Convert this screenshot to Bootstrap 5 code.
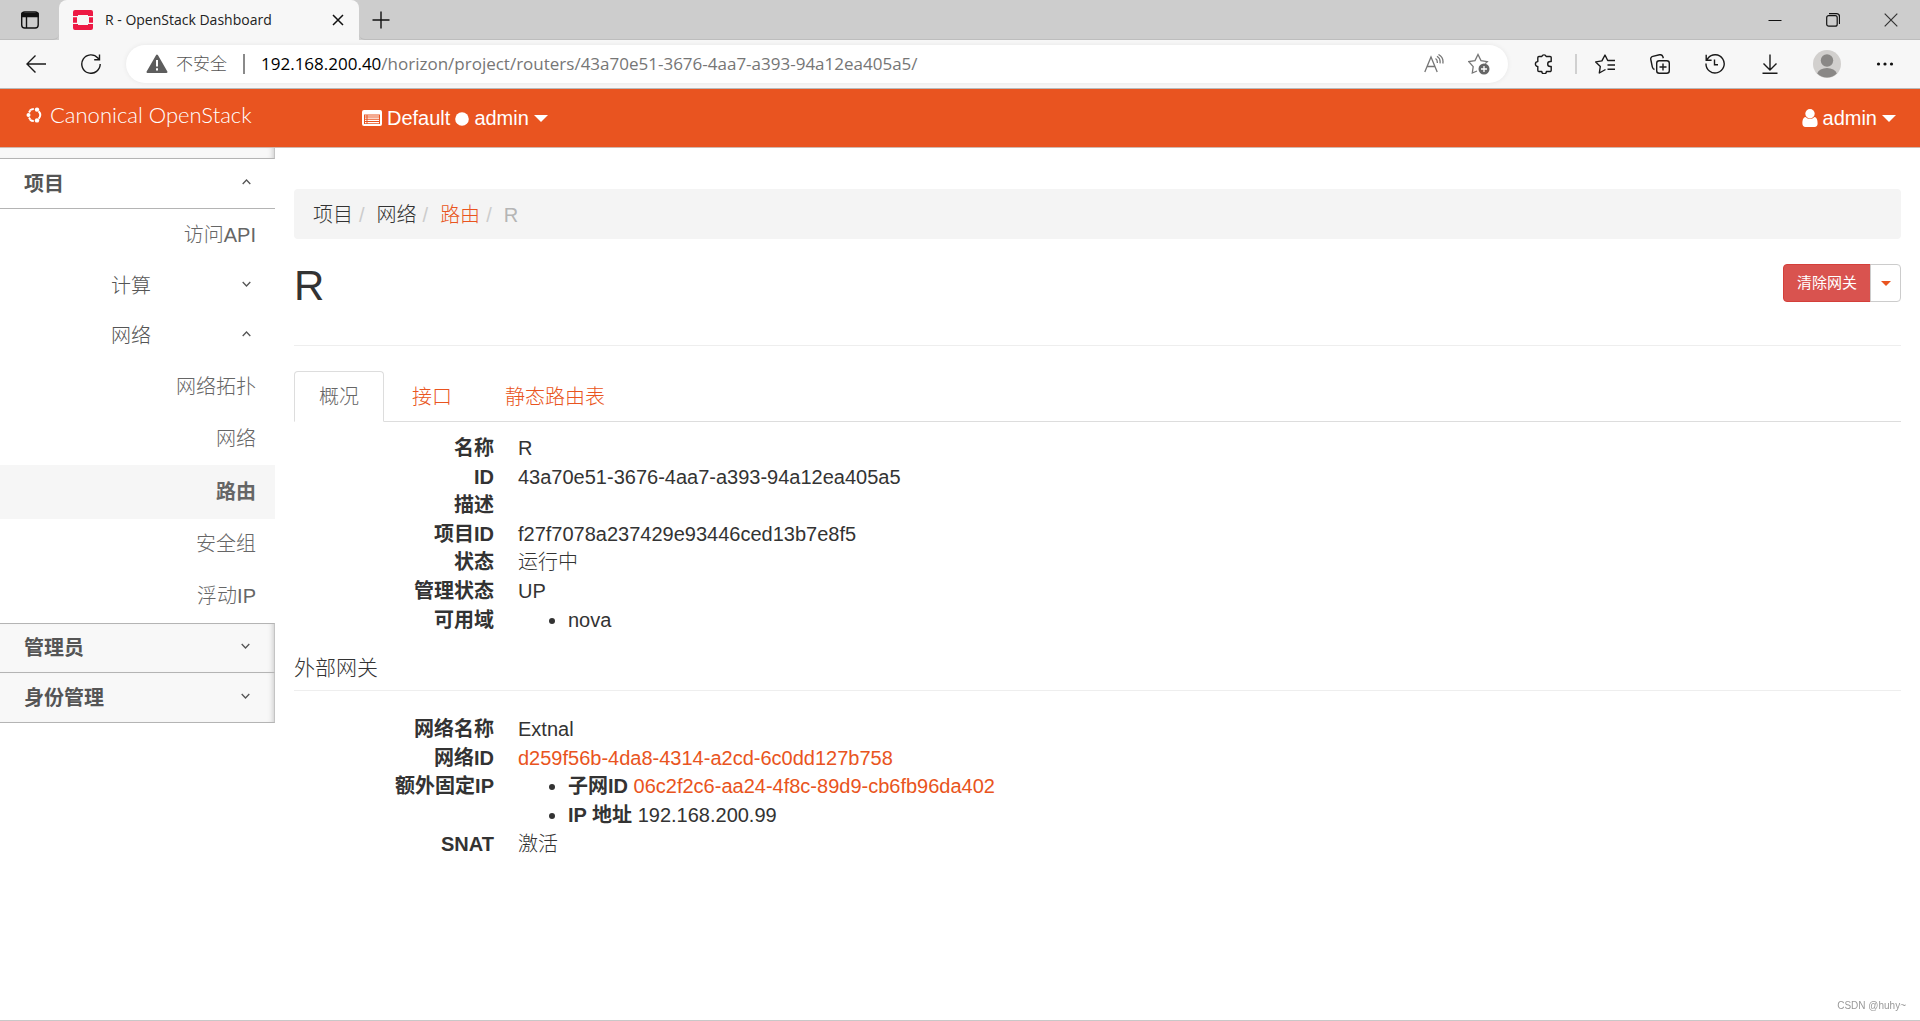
<!DOCTYPE html>
<html lang="zh-CN">
<head>
<meta charset="utf-8">
<meta name="viewport" content="width=device-width, initial-scale=1">
<title>R - OpenStack Dashboard</title>
<link href="https://cdn.jsdelivr.net/npm/bootstrap@5.3.0/dist/css/bootstrap.min.css" rel="stylesheet">
<style>
  :root { --brand: #e95420; --rule: #b4b4b4; }
  body {
    font-family: "Liberation Sans", Arial, "Noto Sans CJK SC", sans-serif;
    font-size: 20px; font-weight: 300; line-height: 1.43; color: #333; background: #fff;
    min-height: 100vh; border-bottom: 1px solid #c8c8c8;
  }
  a { color: var(--brand); text-decoration: none; }
  a:hover { color: #ae3910; }
  svg { display: block; flex: none; }
  strong { font-weight: 700; }
  .icon-btn { border: 0; background: none; padding: 0; display: flex; align-items: center; justify-content: center; color: #1a1a1a; }

  /* browser chrome */
  .chrome { font-family: "Open Sans", "Noto Sans CJK SC", sans-serif; font-weight: 400; }
  .tab-strip { height: 40px; background: #cdcdcd; }
  .tab-strip .side { height: 40px; border-bottom: 1px solid #bdbdbd; }
  .tab-strip .side-start { width: 59px; border-bottom-right-radius: 6px; }
  .tab-strip .side-end { border-bottom-left-radius: 6px; }
  .browser-tab { width: 300px; height: 40px; background: #f7f7f7; border-radius: 8px 8px 0 0; padding: 0 14px; font-size: 14px; color: #222; }
  .new-tab { width: 43px; }
  .window-btn { width: 58px; }
  .toolbar { height: 49px; background: #f7f7f7; border-bottom: 1px solid #b9b9b9; padding-right: 8px; }
  .nav-btn { width: 55px; height: 40px; }
  .address { height: 38px; border-radius: 19px; background: #fff; box-shadow: 0 0 5px rgba(0,0,0,.07); padding: 0 18px 0 20px; font-size: 17px; line-height: 24px; color: #767676; }
  .address .unsafe { font-weight: 300; color: #555; }
  .v-rule { width: 2px; height: 20px; background: #8a8a8a; }
  .v-rule-light { background: #d0d0d0; }
  .url { outline: 0; white-space: nowrap; }
  .url b { font-weight: 400; color: #000; }
  .tool-btn { width: 55px; height: 40px; }
  .profile-btn { width: 60px; }

  /* dashboard header */
  .topbar { height: 59px; background: var(--brand); border-bottom: 1px solid #cfb9b0; padding: 0 24px 0 26px; }
  .topbar a { color: #fff; }
  .brand-link { width: 336px; font-family: Lato, sans-serif; font-weight: 300; font-size: 22px; line-height: 28px; padding-bottom: 6px; }
  .menu-link { display: flex; align-items: center; gap: 5px; }
  .caret-down { border: 7px solid transparent; border-top-color: currentColor; border-bottom: 0; }

  /* sidebar */
  .sidebar { width: 275px; flex: none; }
  .panel-btn { display: flex; align-items: center; justify-content: space-between; width: 100%; border: 0; border-bottom: 1px solid var(--rule); background: #fff; padding: 0 24px; height: 50px; font-weight: 700; color: #555; line-height: 28px; }
  .shade { background: #f8f8f8; box-shadow: inset -5px 0 6px -5px #bbb; border-right: 1px solid #c4c4c4; }
  .panel-cap { height: 11px; border-bottom: 1px solid var(--rule); }
  .panel-last { border-top: 1px solid var(--rule); }
  .group-btn { display: flex; align-items: center; justify-content: space-between; width: 100%; height: 50px; border: 0; background: #fff; padding: 0 24px 0 111px; font-weight: 300; color: #555; }
  .side-link { display: block; text-align: right; padding: 12px 19px; line-height: 28px; color: #666; }
  .side-link.current { background: #f6f6f6; font-weight: 700; padding: 13px 19px; }
  .side-link.current ~ .side-link { padding: 11px 19px 13px; }

  /* content */
  .content { padding: 41px 19px 0; min-width: 0; }
  .crumbs { background: #f4f4f4; border-radius: 4px; padding: 12px 19px 10px; line-height: 28px; margin-bottom: 25px; --bs-breadcrumb-divider-color: #ccc; --bs-breadcrumb-item-padding-x: 6px; --bs-breadcrumb-item-active-color: #b5b5b5; }
  .crumbs .breadcrumb-item::before { padding-right: 12px; }
  .page-head { border-bottom: 1px solid #eee; padding-bottom: 37px; margin-bottom: 25px; }
  .page-title { font-size: 42px; font-weight: 400; line-height: 44px; margin: 0; }
  .act { font-size: 15px; font-weight: 400; line-height: 22px; padding: 7px 13px; border-radius: 4px; height: 38px; }
  .act-danger { color: #fff; background: #d9534f; border-color: #d43f3a; }
  .act-more { color: var(--brand); background: #fff; border-color: #ccc; width: 31px; padding: 0 8px; }
  .act-more .caret-down { border-width: 5px 5px 0; }
  .tabs { --bs-nav-tabs-border-color: #ddd; --bs-nav-tabs-border-radius: 4px; gap: 3px; }
  .tabs .nav-link { padding: 11px 24px 9px; line-height: 29px; color: var(--brand); }
  .tabs .nav-link.active { color: #666; border-color: #ddd #ddd #fff; }
  .props { display: grid; grid-template-columns: 200px 1fr; column-gap: 24px; margin: 0; }
  .props dt { text-align: right; font-weight: 700; }
  .props dd { margin: 0; font-weight: 300; }
  .props ul { margin: 0; padding-left: 50px; }
  .section-title { font-size: 21px; font-weight: 300; line-height: 28px; margin: 20px 0 24px; padding-bottom: 8px; border-bottom: 1px solid #eee; }
  .watermark { position: fixed; right: 14px; bottom: 7px; font-size: 10px; line-height: 16px; color: #999; }
</style>
</head>
<body>
<div class="chrome">
  <div class="tab-strip d-flex">
    <div class="side side-start d-flex justify-content-center align-items-center">
      <button class="icon-btn ps-0" aria-label="标签页操作"><svg width="20" height="20" viewBox="0 0 20 20" fill="none" stroke="#111" stroke-width="1.4"><rect x="1.700" y="2" width="16.500" height="16" rx="3"/><path d="M2 3.500h16v3H2z" fill="#111"/><path d="M6.500 7v11"/></svg></button>
    </div>
    <div class="browser-tab d-flex align-items-center">
      <svg width="20" height="20" viewBox="0 0 20 20" fill="#ed1944"><path d="M2 0h16a2 2 0 0 1 2 2v4h-5V5H5v1H0V2a2 2 0 0 1 2-2zM0 7.200h4v5.600H0zM16 7.200h4v5.600h-4zM0 14h5v1h10v-1h5v4a2 2 0 0 1-2 2H2a2 2 0 0 1-2-2z"/></svg>
      <span class="ms-2 ps-1 flex-grow-1">R - OpenStack Dashboard</span>
      <button class="icon-btn" aria-label="关闭标签页"><svg width="14" height="14" viewBox="0 0 14 14" stroke="#111" stroke-width="1.500"><path d="M2 2l10 10M12 2L2 12"/></svg></button>
    </div>
    <div class="side side-end d-flex flex-grow-1">
      <button class="icon-btn new-tab" aria-label="新建标签页"><svg width="18" height="18" viewBox="0 0 18 18" stroke="#111" stroke-width="1.400"><path d="M9 .5v17M.5 9h17"/></svg></button>
      <span class="flex-grow-1"></span>
      <button class="icon-btn window-btn" aria-label="最小化"><svg width="14" height="14" viewBox="0 0 14 14" stroke="#111"><path d="M.5 7.500h13"/></svg></button>
      <button class="icon-btn window-btn" aria-label="还原"><svg width="14" height="14" viewBox="0 0 14 14" fill="none" stroke="#111" stroke-width="1.200"><rect x=".7" y="2.700" width="10.500" height="10.500" rx="2"/><path d="M3 .700h7.500a3 3 0 0 1 3 3V11"/></svg></button>
      <button class="icon-btn window-btn" aria-label="关闭"><svg width="14" height="14" viewBox="0 0 14 14" stroke="#333" stroke-width="1.200"><path d="M.7.7l12.600 12.600M13.300.7L.7 13.300"/></svg></button>
    </div>
  </div>
  <div class="toolbar d-flex align-items-center">
    <div class="d-flex ps-2">
      <button class="icon-btn nav-btn" aria-label="返回"><svg width="20" height="18" viewBox="0 0 20 18" fill="none" stroke="currentColor" stroke-width="1.400"><path d="M20 9H1M9.500.5L1 9l8.500 8.500"/></svg></button>
      <button class="icon-btn nav-btn" aria-label="刷新"><svg width="20" height="20" viewBox="0 0 20 20" fill="none" stroke="currentColor" stroke-width="1.400"><path d="M19.200 10a9.200 9.200 0 1 1-2.300-6L18 5.500M18.500.5v5.300h-5.300"/></svg></button>
    </div>
    <div class="address d-flex align-items-center flex-grow-1 ms-2">
      <svg width="22" height="20" viewBox="0 0 22 20"><path d="M11 1.500L20.500 18H1.500z" fill="#5d5d5d" stroke="#5d5d5d" stroke-width="2" stroke-linejoin="round"/><path d="M11 6v6.500M11 14.300v2.200" stroke="#fff" stroke-width="2"/></svg>
      <span class="unsafe ms-2">不安全</span>
      <span class="v-rule mx-3"></span>
      <div class="url flex-grow-1" role="textbox" aria-label="地址栏" contenteditable="true" spellcheck="false"><b>192.168.200.40</b>/horizon/project/routers/43a70e51-3676-4aa7-a393-94a12ea405a5/</div>
      <button class="icon-btn" aria-label="大声朗读"><svg width="20" height="20" viewBox="0 0 20 20" fill="none" stroke="#767676" stroke-width="1.300"><path d="M.8 18L7 3l6.200 15M3 12.500h8M11.500 4.500c1.500 1 2 2.500 1.800 4.500M13 2.300c2.500 1.500 3.500 4 3 7M14.500.5c3.500 2 5 5.500 4.300 9"/></svg></button>
      <button class="icon-btn ms-4" aria-label="添加到收藏夹"><svg width="22" height="22" viewBox="0 0 22 22" fill="none" stroke="#767676" stroke-width="1.300"><path d="M9 18l-4.700 2 .9-6.300L.8 8.600l6.200-1L10 1.500l3 6.100 6.300 1-2 2"/><circle cx="16" cy="16" r="5.500" fill="#666" stroke="none"/><path d="M16 13v6M13 16h6" stroke="#fff"/></svg></button>
    </div>
    <button class="icon-btn tool-btn ms-2" aria-label="扩展"><svg width="20" height="20" viewBox="0 0 20 20" fill="none" stroke="currentColor" stroke-width="1.400" stroke-linejoin="round"><path d="M5 2.500h2.800a2.300 2.300 0 0 1 4.400 0H16a1.200 1.200 0 0 1 1.200 1.200V7.500h-1a2.500 2.500 0 0 0 0 5h1v3.800A1.200 1.200 0 0 1 16 17.500h-3.600a2.300 2.300 0 0 1-4.600 0H5a1.200 1.200 0 0 1-1.200-1.200v-3.900a2.400 2.400 0 0 1 0-4.800V3.700A1.200 1.200 0 0 1 5 2.500z"/></svg></button>
    <span class="v-rule v-rule-light ms-1"></span>
    <button class="icon-btn tool-btn" aria-label="收藏夹"><svg width="20" height="20" viewBox="0 0 20 20" fill="none" stroke="currentColor" stroke-width="1.400" stroke-linejoin="round"><path d="M10.500 15.500L4.300 19l1-6.500L.7 7.900l6.200-1L10 1l2.700 5.500H20M12.500 11H20M12.500 15.300H20"/></svg></button>
    <button class="icon-btn tool-btn" aria-label="集锦"><svg width="20" height="20" viewBox="0 0 20 20" fill="none" stroke="currentColor" stroke-width="1.400"><rect x="6.700" y="6.700" width="12.600" height="12.600" rx="2.500"/><path d="M13 9.500v7M9.500 13h7M4.500 15.500C3 15 2.600 14 2.300 12.800L.8 5.500C.4 4 1.300 2.800 2.800 2.400L9.500.8c1.800-.4 3 .5 3.400 2l.4 1.500"/></svg></button>
    <button class="icon-btn tool-btn" aria-label="历史记录"><svg width="20" height="20" viewBox="0 0 20 20" fill="none" stroke="currentColor" stroke-width="1.400"><path d="M1 9.500a9.100 9.100 0 1 0 2-5.300L1.500 6M1.200.8v5.400h5.400M9.500 5.500v5.300H13"/></svg></button>
    <button class="icon-btn tool-btn" aria-label="下载"><svg width="16" height="20" viewBox="0 0 16 20" fill="none" stroke="currentColor" stroke-width="1.400"><path d="M8 .5v15M1.500 9.500L8 16l6.500-6.500M.5 19.300h15"/></svg></button>
    <button class="icon-btn tool-btn profile-btn" aria-label="个人资料"><svg width="28" height="28" viewBox="0 0 28 28"><circle cx="14" cy="14" r="14" fill="#d2d0ce"/><circle cx="14" cy="10.500" r="6.200" fill="#8a8886"/><path d="M4.200 23.500a10 7 0 0 1 19.600 0A14 14 0 0 1 4.200 23.500z" fill="#8a8886"/></svg></button>
    <button class="icon-btn tool-btn" aria-label="设置及其他"><svg width="18" height="4" viewBox="0 0 18 4" fill="#111"><circle cx="2.500" cy="2" r="1.600"/><circle cx="9" cy="2" r="1.600"/><circle cx="15.500" cy="2" r="1.600"/></svg></button>
  </div>
</div>

<nav class="topbar d-flex align-items-center">
  <a href="#" class="brand-link d-flex align-items-center gap-2">
    <svg width="16" height="16" viewBox="0 0 16 16" fill="none" stroke="#fff" stroke-width="2"><path d="M4 3.300A6 6 0 0 1 7.800 2M12.600 4.200A6 6 0 0 1 14.300 8a6 6 0 0 1-1.700 3.800M7.800 14A6 6 0 0 1 4 12.700"/><path d="M3 5.500l1.200-2M3 10.500l1.200 2"/><circle cx="2.500" cy="8" r="2" fill="#fff" stroke="none"/><circle cx="11" cy="2.600" r="2.200" fill="#fff" stroke="none"/><circle cx="11" cy="13.400" r="2.200" fill="#fff" stroke="none"/></svg>
    <span>Canonical OpenStack</span>
  </a>
  <a href="#" class="menu-link">
    <svg width="20" height="16" viewBox="0 0 20 16"><rect width="20" height="16" rx="2" fill="#fff"/><path d="M2 4.500h16v9.500H2z" fill="#e95420"/><path d="M3 6h1.500M5.500 6H17M3 8.200h1.500M5.500 8.200H17M3 10.400h1.500M5.500 10.400H17M3 12.600h1.500M5.500 12.600H17" stroke="#fff" stroke-width="1.200"/></svg>
    <span>Default</span>
    <svg width="14" height="16" viewBox="0 0 14 16"><circle cx="7" cy="9" r="6.800" fill="#fff"/></svg>
    <span>admin</span>
    <span class="caret-down"></span>
  </a>
  <a href="#" class="menu-link ms-auto">
    <svg width="16" height="18" viewBox="0 0 16 18" fill="#fff"><circle cx="8" cy="4.700" r="4.700"/><path d="M3.500 8C1 8.500.4 11.500.4 14.500.4 16.500 1.500 18 3.500 18h9c2 0 3.100-1.500 3.100-3.500 0-3-.6-6-3.100-6.500a6 6 0 0 1-9 0z"/></svg>
    <span>admin</span>
    <span class="caret-down"></span>
  </a>
</nav>

<div class="d-flex">
  <aside class="sidebar">
    <div class="panel-cap shade"></div>
    <button class="panel-btn" aria-expanded="true">项目<svg width="9" height="12" viewBox="0 0 9 12" fill="none" stroke="#555" stroke-width="1.300"><path d="M.7 6L4.500 2l3.800 4"/></svg></button>
    <a href="#" class="side-link">访问API</a>
    <button class="group-btn" aria-expanded="false">计算<svg width="9" height="12" viewBox="0 0 9 12" fill="none" stroke="#555" stroke-width="1.300"><path d="M.7 2l3.800 4 3.800-4"/></svg></button>
    <button class="group-btn" aria-expanded="true">网络<svg width="9" height="12" viewBox="0 0 9 12" fill="none" stroke="#555" stroke-width="1.300"><path d="M.7 6L4.500 2l3.800 4"/></svg></button>
    <a href="#" class="side-link">网络拓扑</a>
    <a href="#" class="side-link">网络</a>
    <a href="#" class="side-link current" aria-current="page">路由</a>
    <a href="#" class="side-link">安全组</a>
    <a href="#" class="side-link">浮动IP</a>
    <button class="panel-btn shade panel-last" aria-expanded="false">管理员<svg width="9" height="12" viewBox="0 0 9 12" fill="none" stroke="#555" stroke-width="1.300"><path d="M.7 2l3.800 4 3.800-4"/></svg></button>
    <button class="panel-btn shade" aria-expanded="false">身份管理<svg width="9" height="12" viewBox="0 0 9 12" fill="none" stroke="#555" stroke-width="1.300"><path d="M.7 2l3.800 4 3.800-4"/></svg></button>
  </aside>

  <main class="content flex-grow-1">
    <ol class="breadcrumb crumbs">
      <li class="breadcrumb-item">项目</li>
      <li class="breadcrumb-item">网络</li>
      <li class="breadcrumb-item"><a href="#">路由</a></li>
      <li class="breadcrumb-item active" aria-current="page">R</li>
    </ol>
    <div class="page-head d-flex justify-content-between align-items-start">
      <h1 class="page-title">R</h1>
      <div class="btn-group">
        <button class="btn act act-danger">清除网关</button>
        <button class="btn act act-more d-flex align-items-center justify-content-center" aria-label="更多操作"><span class="caret-down"></span></button>
      </div>
    </div>
    <ul class="nav nav-tabs tabs">
      <li class="nav-item"><a class="nav-link active" href="#">概况</a></li>
      <li class="nav-item"><a class="nav-link" href="#">接口</a></li>
      <li class="nav-item"><a class="nav-link" href="#">静态路由表</a></li>
    </ul>
    <dl class="props pt-2 mt-1">
      <dt>名称</dt><dd>R</dd>
      <dt>ID</dt><dd>43a70e51-3676-4aa7-a393-94a12ea405a5</dd>
      <dt>描述</dt><dd></dd>
      <dt>项目ID</dt><dd>f27f7078a237429e93446ced13b7e8f5</dd>
      <dt>状态</dt><dd>运行中</dd>
      <dt>管理状态</dt><dd>UP</dd>
      <dt>可用域</dt><dd><ul><li>nova</li></ul></dd>
    </dl>
    <h2 class="section-title">外部网关</h2>
    <dl class="props">
      <dt>网络名称</dt><dd>Extnal</dd>
      <dt>网络ID</dt><dd><a href="#">d259f56b-4da8-4314-a2cd-6c0dd127b758</a></dd>
      <dt>额外固定IP</dt><dd><ul><li><strong>子网ID</strong> <a href="#">06c2f2c6-aa24-4f8c-89d9-cb6fb96da402</a></li><li><strong>IP 地址</strong> 192.168.200.99</li></ul></dd>
      <dt>SNAT</dt><dd>激活</dd>
    </dl>
  </main>
</div>
<div class="watermark">CSDN @huhy~</div>
<script src="https://cdn.jsdelivr.net/npm/bootstrap@5.3.0/dist/js/bootstrap.bundle.min.js"></script>
</body>
</html>
